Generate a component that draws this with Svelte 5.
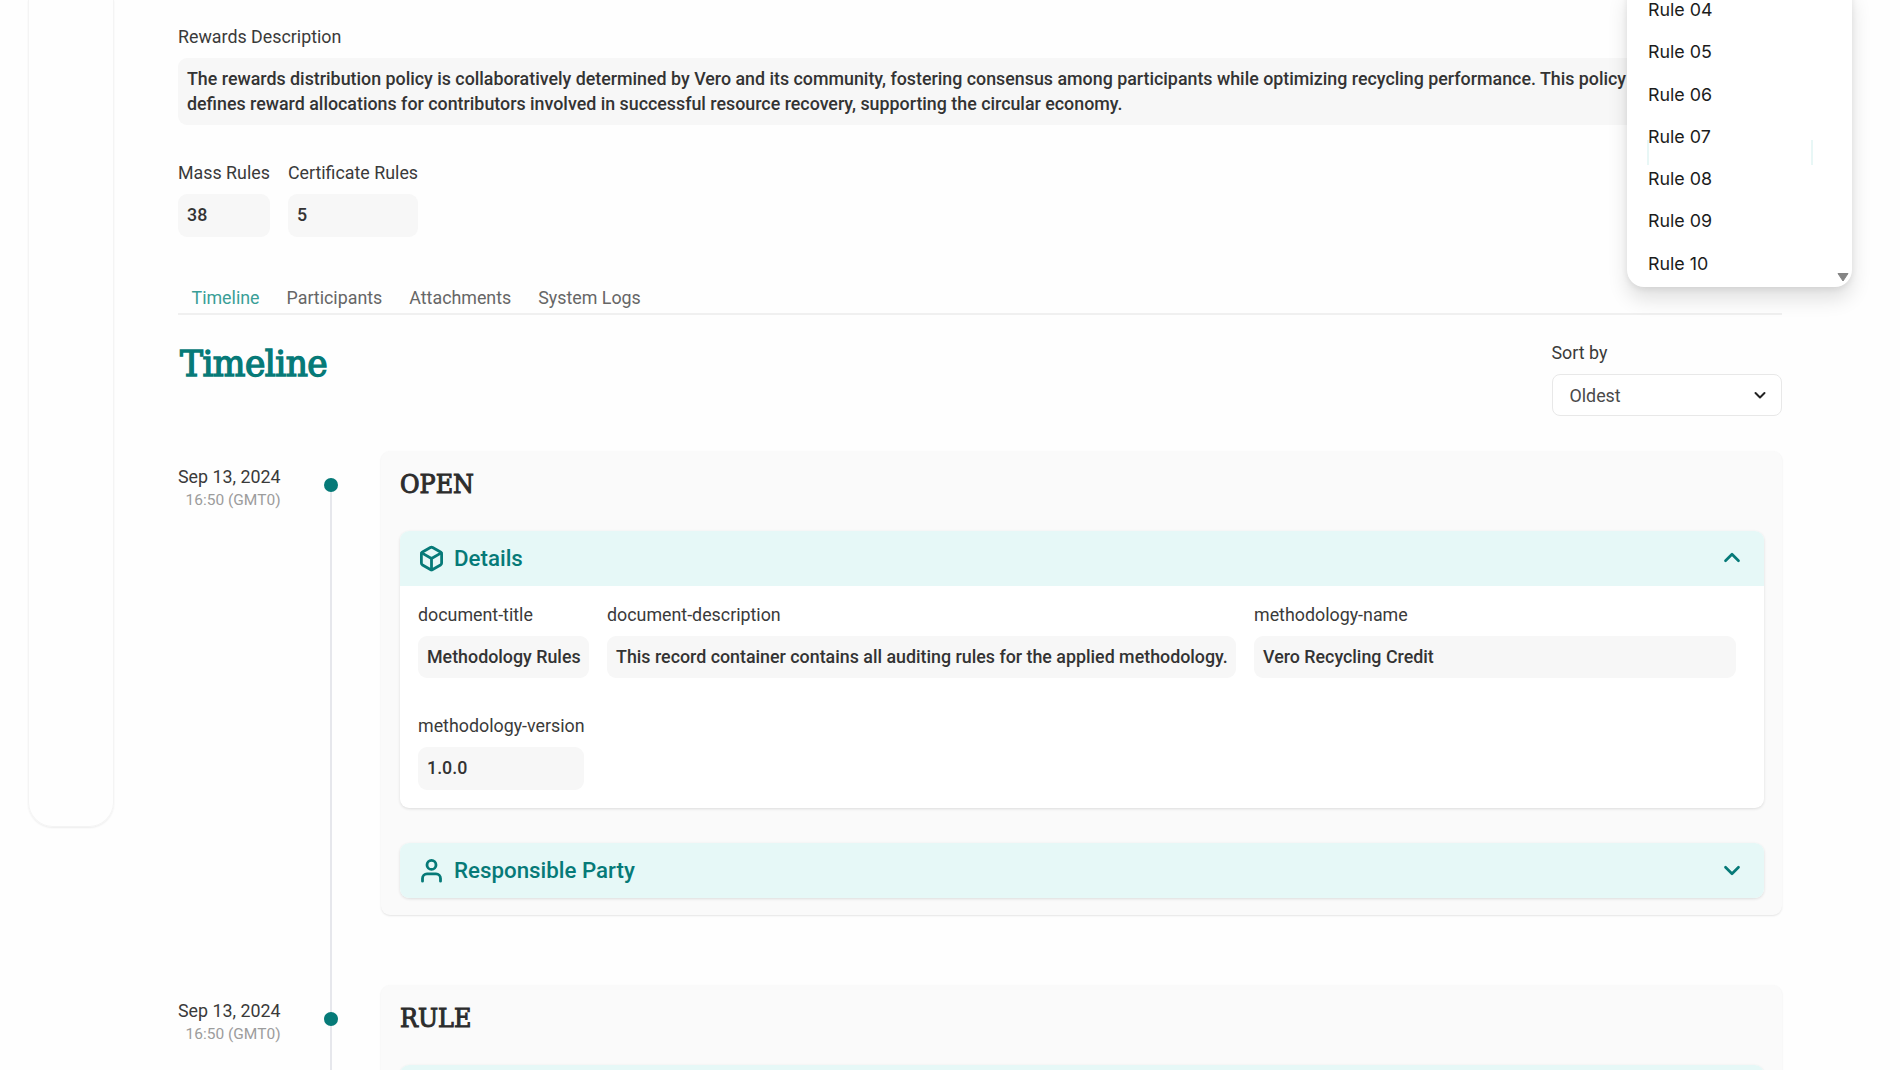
<script>
  let sortBy = 'Oldest'
  let activeTab = 'Timeline'

  const tabs = ['Timeline', 'Participants', 'Attachments', 'System Logs']
  const rules = ['04', '05', '06', '07', '08', '09', '10']

  const summary = [
    { label: 'Mass Rules', value: '38' },
    { label: 'Certificate Rules', value: '5' }
  ]

  const events = [
    {
      name: 'OPEN',
      date: 'Sep 13, 2024',
      time: '16:50 (GMT0)',
      sections: [
        {
          title: 'Details',
          icon: 'box',
          open: true,
          fields: [
            { label: 'document-title', value: 'Methodology Rules', size: 'title' },
            { label: 'document-description', value: 'This record container contains all auditing rules for the applied methodology.', size: 'description' },
            { label: 'methodology-name', value: 'Vero Recycling Credit', size: 'name' },
            { label: 'methodology-version', value: '1.0.0', size: 'version' }
          ]
        },
        { title: 'Responsible Party', icon: 'user', open: false, fields: [] }
      ]
    },
    {
      name: 'RULE',
      date: 'Sep 13, 2024',
      time: '16:50 (GMT0)',
      sections: [{ title: '', icon: '', open: false, fields: [] }]
    }
  ]
</script>

<div class="page">
  <aside class="sidebar"></aside>

  <main>
    <div class="label">Rewards Description</div>
    <div class="value">
      The rewards distribution policy is collaboratively determined by Vero and its community, fostering consensus among participants while optimizing recycling performance. This policy<br />
      defines reward allocations for contributors involved in successful resource recovery, supporting the circular economy.
    </div>

    <div class="summary">
      {#each summary as s}
        <div class="field">
          <div class="label">{s.label}</div>
          <div class="value">{s.value}</div>
        </div>
      {/each}
    </div>

    <nav class="tabs">
      {#each tabs as tab}
        <button class="tab" class:active={tab === activeTab} on:click={() => (activeTab = tab)}>{tab}</button>
      {/each}
    </nav>

    <div class="heading">
      <h1>Timeline</h1>
      <div class="sort">
        <div class="label">Sort by</div>
        <button class="select">
          <span>{sortBy}</span>
          <svg width="16" height="16" viewBox="0 0 16 16"><path d="M3.5 6l4.5 4.5L12.5 6" /></svg>
        </button>
      </div>
    </div>

    {#each events as ev}
      <section class="event">
        <div class="when">
          <div class="date">{ev.date}</div>
          <div class="time">{ev.time}</div>
        </div>
        <div class="track"><span class="dot"></span></div>
        <div class="card">
          <h2>{ev.name}</h2>
          {#each ev.sections as s}
            <div class="accordion">
              <div class="accordion-head">
                {#if s.icon}
                  <svg class="icon" viewBox="0 0 24 24">
                    {#if s.icon === 'box'}
                      <path d="M21 16V8a2 2 0 0 0-1-1.73l-7-4a2 2 0 0 0-2 0l-7 4A2 2 0 0 0 3 8v8a2 2 0 0 0 1 1.73l7 4a2 2 0 0 0 2 0l7-4A2 2 0 0 0 21 16z" />
                      <path d="M3.3 7l8.7 5 8.7-5M12 22V12" />
                    {:else}
                      <circle cx="12" cy="7" r="4" />
                      <path d="M20 21.5v-2.5a4 4 0 0 0-4-4H8a4 4 0 0 0-4 4v2.5" />
                    {/if}
                  </svg>
                {/if}
                <span>{s.title}</span>
                <svg class="chevron" class:up={s.open} viewBox="0 0 24 24"><path d="M6 9.5l6 6 6-6" /></svg>
              </div>
              {#if s.open}
                <div class="accordion-body">
                  {#each s.fields as f}
                    <div class="field {f.size}">
                      <div class="label">{f.label}</div>
                      <div class="value">{f.value}</div>
                    </div>
                  {/each}
                </div>
              {/if}
            </div>
          {/each}
        </div>
      </section>
    {/each}
  </main>

  <!-- rule picker, open over the page -->
  <div class="menu">
    {#each rules as r}
      <div class="option">Rule {r}</div>
    {/each}
    <span class="focus-edge"></span>
    <svg class="scroll-arrow" width="14" height="11" viewBox="0 0 14 11"><path d="M2 1.5h10L7 9z" /></svg>
  </div>
</div>

<style>
  :global(body) { background: #fefefe; overflow: hidden; }
  .page {
    position: relative;
    display: flex;
    height: 1070px;
    overflow: hidden;
    font-family: Roboto, sans-serif;
    font-size: 17.84px;
    color: #3a3a3a;
  }
  .sidebar {
    width: 84px;
    height: 826px;
    margin: 0 64px 0 28px;
    border: 1px solid #f4f4f4;
    border-top: 0;
    border-radius: 0 0 25px 25px;
    box-shadow: 0 1px 2px rgba(0, 0, 0, 0.07);
    flex-shrink: 0;
  }
  main {
    width: 1604px;
    padding-top: 24px;
    flex-shrink: 0;
  }
  .label {
    line-height: 26px;
    margin-bottom: 8px;
    white-space: nowrap;
  }
  .value {
    box-sizing: border-box;
    padding: 9px;
    border-radius: 9px;
    background: #f7f7f7;
    font-weight: 500;
    line-height: 24.5px;
    color: #333;
    white-space: nowrap;
  }
  .summary {
    display: flex;
    gap: 18px;
    margin-top: 35px;
  }
  .tabs {
    display: flex;
    gap: 27px;
    height: 34px;
    padding: 0 13.5px;
    margin-top: 42px;
    border-bottom: 2px solid #f0f0f0;
  }
  .tab {
    padding: 2px 0 0;
    border: 0;
    background: none;
    font: inherit;
    line-height: 34px;
    color: #666;
  }
  .tab.active { color: #3a9e97; }

  .heading {
    display: flex;
    justify-content: space-between;
    height: 136px;
  }
  h1 {
    margin: 22px 0 0 2px;
    font-family: 'DejaVu Serif', serif;
    font-size: 34.5px;
    font-weight: 400;
    letter-spacing: -0.6px;
    line-height: 54px;
    color: #067a78;
    -webkit-text-stroke: 1.4px #067a78;
  }
  .sort {
    width: 230.500px;
    padding-top: 25px;
  }
  .select {
    display: flex;
    align-items: center;
    justify-content: space-between;
    width: 100%;
    height: 42px;
    padding: 1px 13px 0 17px;
    border: 1px solid #e8e8e8;
    border-radius: 8px;
    background: #fff;
    font: inherit;
    color: #4a4a4a;
  }
  .select svg {
    fill: none;
    stroke: #222;
    stroke-width: 2;
    stroke-linecap: round;
    stroke-linejoin: round;
  }

  .event {
    display: flex;
    padding-bottom: 70px;
  }
  .when {
    width: 103.5px;
    padding-top: 14px;
    text-align: right;
    white-space: nowrap;
  }
  .date { line-height: 24px; }
  .time {
    font-size: 15.5px;
    line-height: 22px;
    color: #9c9c9c;
  }
  .track {
    display: flex;
    justify-content: center;
    width: 14px;
    margin: 27px 43px -97px 43.5px;
    background: linear-gradient(#e6e7ec, #e6e7ec) center / 2px 100% no-repeat;
  }
  .dot {
    width: 14px;
    height: 14px;
    border-radius: 50%;
    background: #067a78;
  }
  .card {
    box-sizing: border-box;
    width: 1401px;
    padding: 17px 18px 17px 19px;
    border-radius: 9px;
    background: #fafafa;
    box-shadow: 0 1px 2px rgba(0, 0, 0, 0.1);
    flex-shrink: 0;
  }
  h2 {
    margin: 0 0 31px;
    font-family: 'DejaVu Serif', serif;
    font-stretch: condensed;
    font-size: 26.5px;
    font-weight: 400;
    line-height: 32px;
    color: #2c2c2c;
    -webkit-text-stroke: 1px #2c2c2c;
  }
  .accordion {
    border-radius: 9px;
    background: #fff;
    box-shadow: 0 1px 3px rgba(0, 0, 0, 0.12);
    overflow: hidden;
  }
  .accordion + .accordion { margin-top: 35px; }
  .accordion-head {
    display: flex;
    align-items: center;
    height: 55px;
    padding: 0 19px 0 18px;
    background: #e6f8f7;
    font-size: 22.3px;
    font-weight: 500;
    color: #067a78;
  }
  .accordion-head svg {
    fill: none;
    stroke: currentColor;
    stroke-width: 2.5;
    stroke-linecap: round;
    stroke-linejoin: round;
  }
  .icon {
    width: 27px;
    height: 27px;
    margin-right: 9px;
  }
  .chevron {
    width: 26px;
    height: 26px;
    margin-left: auto;
  }
  .chevron.up { transform: rotate(180deg); }
  .accordion-body {
    display: flex;
    flex-wrap: wrap;
    gap: 35px 18px;
    padding: 16px 18px 18px;
  }
  .title { width: 171px; }
  .description { width: 629px; }
  .name { width: 482px; }
  .version { width: 166px; }

  .menu {
    position: absolute;
    left: 1627px;
    top: -11px;
    width: 225px;
    height: 298px;
    border-radius: 0 0 17px 17px;
    background: #fff;
    box-shadow: 0 12px 20px rgba(0, 0, 0, 0.12), 0 2px 6px rgba(0, 0, 0, 0.08);
  }
  .option {
    padding-left: 21px;
    font-family: Inter, sans-serif;
    font-size: 17.84px;
    line-height: 42.3px;
    color: #1c1c1c;
  }
  .focus-edge {
    position: absolute;
    left: 20px;
    top: 151px;
    width: 162px;
    height: 25px;
    border: solid #e8f7f6;
    border-width: 0 2px;
  }
  .scroll-arrow {
    position: absolute;
    right: 2px;
    bottom: 4px;
    fill: #858585;
    stroke: #858585;
    stroke-linejoin: round;
  }
</style>
